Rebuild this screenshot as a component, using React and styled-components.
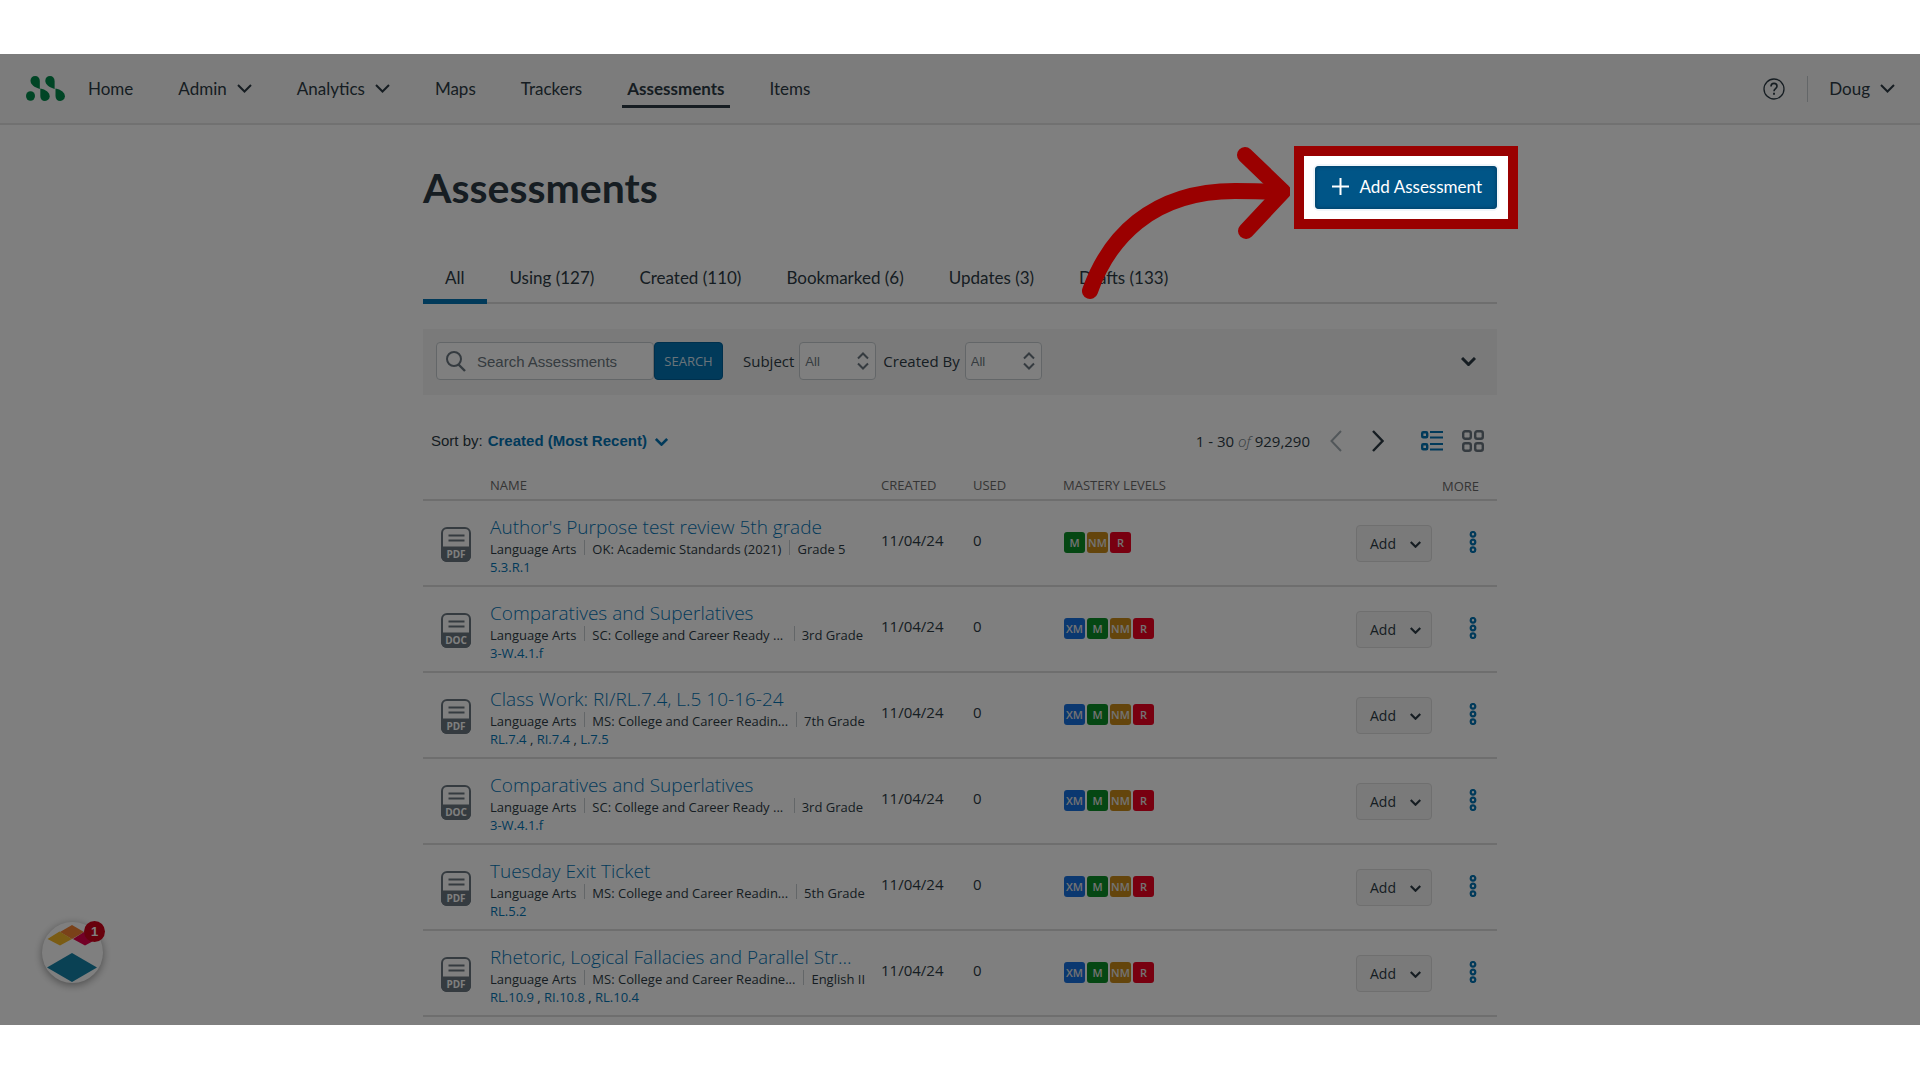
import React from 'react'
import styled, { createGlobalStyle } from 'styled-components'

const GlobalStyle = createGlobalStyle`
  * {
    box-sizing: border-box;
  }

  body {
    margin: 0;
    background-color: #fff;
    color: #2d3b45;
    font-family: "Open Sans", "Noto Sans", sans-serif;
    font-size: 15px;
  }

  a {
    color: inherit;
    text-decoration: none;
  }

  button, input, select {
    font: inherit;
    color: inherit;
    margin: 0;
    cursor: pointer;
  }
`

const Page = styled.div`
  padding: 54px 0;
`

const Stage = styled.div`
  position: relative;
  overflow: hidden;
  padding-bottom: 8px;
`

const Header = styled.header`
  height: 71px;
  padding: 0 25px 0 26px;
  display: flex;
  align-items: center;
  justify-content: space-between;
  background-color: #f8f8f8;
  border-bottom: 2px solid #e2e2e2;
  font-family: Lato, sans-serif;
  font-size: 17px;
`

const Nav = styled.nav`
  display: flex;
  align-items: center;
  gap: 35px;
`

const Logo = styled.a`
  display: flex;
  margin-right: -17px;
`

const NavLink = styled.a`
  display: flex;
  align-items: center;
  gap: 10px;
  height: 38px;
  padding: 0 5px;
  font-weight: ${props => props.$active ? 700 : 400};
  border-top: 3px solid transparent;
  border-bottom: 3px solid ${props => props.$active ? "#2d3b45" : "transparent"};
`

const HeaderRight = styled.div`
  display: flex;
  align-items: center;
`

const IconButton = styled.button`
  display: flex;
  align-items: center;
  justify-content: center;
  padding: 0;
  border: none;
  background: transparent;
  color: ${props => props.$color || "#2d3b45"};
`

const UserButton = styled(IconButton)`
  gap: 10px;
  height: 26px;
  margin-left: 22px;
  padding-left: 21px;
  border-left: 1px solid #c7cdd1;
`

const Main = styled.main`
  max-width: 1074px;
  margin: 0 auto;
  padding-top: 41px;
`

const TitleRow = styled.div`
  display: flex;
  align-items: center;
  justify-content: space-between;
  height: 43px;
`

const Title = styled.h1`
  margin: 0;
  font-family: Lato, sans-serif;
  font-size: 41px;
  font-weight: 700;
  line-height: 43px;
`

const AddWrap = styled.div`
  position: relative;
`

const AddButton = styled.button`
  display: flex;
  align-items: center;
  gap: 11px;
  height: 43px;
  padding: 0 15px 2px 17px;
  border: none;
  border-radius: 4px;
  background-color: #005587;
  box-shadow: inset 0 0 4px #00375a, 0 0 0 2px #f1f6fa;
  color: #fff;
  font-family: Lato, sans-serif;
  font-size: 17px;
`

/* dims everything on the stage except the framed button */
const Spotlight = styled.div`
  position: absolute;
  inset: -20px -21px;
  z-index: 10;
  border: 10px solid #9a0000;
  box-shadow: 0 0 0 3000px rgba(0, 0, 0, 0.5);
  pointer-events: none;
`

const Arrow = styled.svg`
  position: absolute;
  right: 207px;
  top: -24px;
  z-index: 11;
  pointer-events: none;
`

const Tabs = styled.nav`
  display: flex;
  gap: 1px;
  margin-top: 41px;
  height: 54px;
  box-shadow: inset 0 -2px #dcdcdc;
  font-family: Lato, sans-serif;
  font-size: 17px;
`

const Tab = styled.a`
  display: flex;
  align-items: center;
  padding: 0 22px;
  border-top: 5px solid transparent;
  border-bottom: 5px solid ${props => props.$active ? "#0374b5" : "transparent"};
`

const Filters = styled.form`
  display: flex;
  align-items: center;
  height: 66px;
  margin-top: 25px;
  padding: 0 21px 2px 13px;
  background-color: #f5f5f5;
`

const SearchBox = styled.label`
  display: flex;
  align-items: center;
  gap: 11px;
  width: 218px;
  height: 38px;
  padding: 0 9px;
  border: 1px solid #c7cdd1;
  border-radius: 4px;
  background-color: #fff;
  color: #6b7780;
`

const SearchInput = styled.input`
  flex: 1;
  min-width: 0;
  padding: 0;
  border: none;
  outline: none;
  background: transparent;
  font-family: "Liberation Sans", Arial, sans-serif;
  font-size: 15px;

  &::placeholder {
    color: #6b7780;
    opacity: 1;
  }
`

const SearchButton = styled.button`
  width: 69px;
  height: 38px;
  margin-right: 20px;
  padding: 0;
  border: 1px solid #00609a;
  border-radius: 4px;
  background-color: #0374b5;
  color: #d5e6f2;
  font-size: 13px;
`

const Field = styled.label`
  display: flex;
  align-items: center;
  gap: 5px;
  margin-right: 7px;
`

const SelectWrap = styled.span`
  position: relative;
  display: flex;
  color: #6b7780;

  svg {
    position: absolute;
    right: 7px;
    top: 10px;
    pointer-events: none;
  }
`

const Select = styled.select`
  appearance: none;
  width: 77px;
  height: 38px;
  padding: 0 5px;
  border: 1px solid #c7cdd1;
  border-radius: 4px;
  background-color: #fff;
  font-family: "Liberation Sans", Arial, sans-serif;
  font-size: 13px;
`

const FilterToggle = styled(IconButton)`
  margin-left: auto;
`

const Toolbar = styled.div`
  display: flex;
  align-items: center;
  justify-content: space-between;
  height: 38px;
  margin-top: 27px;
  padding: 0 13px 0 8px;
`

const Sort = styled.div`
  display: flex;
  align-items: center;
  gap: 5px;
  padding-bottom: 2px;
  font-family: "Liberation Sans", Arial, sans-serif;
`

const SortButton = styled(IconButton)`
  gap: 8px;
  font-weight: 700;

  svg {
    margin-top: 3px;
  }
`

const Pager = styled.div`
  display: flex;
  align-items: center;
`

const Of = styled.em`
  color: #6b7780;
  font-weight: 300;
`

const PagerButton = styled(IconButton)`
  width: 12px;
  margin-left: ${props => props.$gap}px;
`

const ViewButton = styled(IconButton)`
  margin-left: ${props => props.$gap}px;
`

const Table = styled.table`
  width: 100%;
  table-layout: fixed;
  border-collapse: separate;
  border-spacing: 0;
`

const Th = styled.th`
  width: ${props => props.$width ? props.$width + "px" : "auto"};
  height: 41px;
  padding: ${props => props.$right ? "12px 18px 0 0" : "10px 0 0"};
  border-bottom: 2px solid #dcdcdc;
  text-align: ${props => props.$right ? "right" : "left"};
  color: #6b6b6b;
  font-size: 13px;
  font-weight: 400;
  white-space: nowrap;
`

const Td = styled.td`
  height: 86px;
  padding: ${props => props.$pad || "0"};
  border-bottom: 2px solid #dcdcdc;
`

const Name = styled.div`
  width: 373px;
  white-space: nowrap;
`

const NameLink = styled.a`
  display: block;
  color: #0374b5;
  font-size: 19px;
  font-weight: 300;
  line-height: 26px;
`

const Meta = styled.div`
  display: flex;
  align-items: center;
  height: 18px;
  font-size: 13px;
  line-height: 18px;

  span + span {
    padding-left: 8px;
    background: linear-gradient(#c7cdd1, #c7cdd1) 0 0 / 1px 15px no-repeat;
  }
`

const MetaItem = styled.span`
  flex: ${props => props.$fill ? "1" : "none"};
  padding-right: 8px;

  &:last-child {
    padding-right: 0;
  }
`

const Standards = styled.div`
  font-size: 13px;
  line-height: 18px;

  a {
    color: #0374b5;
  }
`

const Levels = styled.div`
  display: flex;
  gap: 2px;
`

const levelColors = { XM: "#1770e0", M: "#0b8e26", NM: "#c98b19", R: "#f00020" }

const Level = styled.span`
  display: flex;
  align-items: center;
  justify-content: center;
  width: 21px;
  height: 21px;
  border-radius: 3px;
  background-color: ${props => levelColors[props.$level]};
  color: #e6e6e6;
  font-size: 11px;
  font-weight: 600;
`

const RowButton = styled.button`
  display: flex;
  align-items: center;
  justify-content: space-between;
  width: 76px;
  height: 37px;
  padding: 0 10px 0 13px;
  border: 1px solid #dedede;
  border-radius: 4px;
  background-color: #f5f5f5;
  font-size: 14px;

  svg {
    margin-top: 3px;
  }
`

const MoreButton = styled(IconButton)`
  margin-left: auto;
`

const Help = styled.button`
  position: absolute;
  left: 42px;
  bottom: 42px;
  width: 61px;
  height: 61px;
  padding: 0;
  border: none;
  border-radius: 50%;
  background-color: #fff;
  box-shadow: 0 2px 8px rgba(0, 0, 0, 0.4);
`

const HelpCount = styled.span`
  position: absolute;
  right: -2px;
  top: -1px;
  width: 21px;
  height: 21px;
  border-radius: 50%;
  background-color: #d0021b;
  color: #fff;
  font-family: "Liberation Sans", Arial, sans-serif;
  font-size: 13px;
  font-weight: 700;
  line-height: 21px;
`

const Chevron = ({ width = 15, height = 9, stroke = 2 }) => (
  <svg width={width} height={height} viewBox="0 0 15 9" fill="none" stroke="currentColor" strokeWidth={stroke}>
    <path d="M1 1l6.500 6.500L14 1" />
  </svg>
)

const UpDown = () => (
  <svg width="12" height="18" viewBox="0 0 12 18" fill="none" stroke="currentColor" strokeWidth="2">
    <path d="M1 6.500l5-5 5 5M1 11.500l5 5 5-5" />
  </svg>
)

const LogoMark = () => (
  <svg width="39" height="25" viewBox="0 0 39 25" fill="#008a4b">
    <path d="M9.200 0C12 0 13.800 2 13.800 5v8C8.500 11.500 4.500 8.500 4.500 4.800 4.500 2 6.500 0 9.200 0z" />
    <path d="M24 0c2.800 0 4.600 2 4.600 5v8C23.300 11.500 19.300 8.500 19.300 4.800 19.300 2 21.300 0 24 0z" />
    <ellipse cx="4.500" cy="20" rx="4.500" ry="4.800" />
    <path d="M14.300 12.500c5.300 1 9.400 4 9.400 7.800 0 2.700-2 4.700-4.700 4.700-2.800 0-4.700-2-4.700-5z" />
    <path d="M29.500 12.500c5.300 1 9.400 4 9.400 7.800 0 2.700-2 4.700-4.700 4.700-2.800 0-4.700-2-4.700-5z" />
  </svg>
)

const FileIcon = ({ type }) => (
  <svg width="30" height="35" viewBox="0 0 30 35" role="img" aria-label={type}>
    <rect x="1" y="1" width="28" height="33" rx="5" fill="none" stroke="#6b7780" strokeWidth="2" />
    <path d="M0 19.500h30V29a6 6 0 0 1-6 6H6a6 6 0 0 1-6-6z" fill="#6b7780" />
    <path d="M7.500 8.500h16M7.500 13.500h16" stroke="#6b7780" strokeWidth="2" />
    <text x="15" y="31" textAnchor="middle" fill="#fff" fontFamily="Open Sans, sans-serif" fontSize="10" fontWeight="700">{type}</text>
  </svg>
)

const navItems = [
  { label: "Home" },
  { label: "Admin", menu: true },
  { label: "Analytics", menu: true },
  { label: "Maps" },
  { label: "Trackers" },
  { label: "Assessments", active: true },
  { label: "Items" },
]

const tabs = ["All", "Using (127)", "Created (110)", "Bookmarked (6)", "Updates (3)", "Drafts (133)"]

const rows = [
  { type: "PDF", name: "Author's Purpose test review 5th grade", source: "OK: Academic Standards (2021)", grade: "Grade 5", standards: ["5.3.R.1"], levels: ["M", "NM", "R"] },
  { type: "DOC", name: "Comparatives and Superlatives", source: "SC: College and Career Ready ...", grade: "3rd Grade", standards: ["3-W.4.1.f"] },
  { type: "PDF", name: "Class Work: RI/RL.7.4, L.5 10-16-24", source: "MS: College and Career Readin...", grade: "7th Grade", standards: ["RL.7.4", "RI.7.4", "L.7.5"] },
  { type: "DOC", name: "Comparatives and Superlatives", source: "SC: College and Career Ready ...", grade: "3rd Grade", standards: ["3-W.4.1.f"] },
  { type: "PDF", name: "Tuesday Exit Ticket", source: "MS: College and Career Readin...", grade: "5th Grade", standards: ["RL.5.2"] },
  { type: "PDF", name: "Rhetoric, Logical Fallacies and Parallel Str...", source: "MS: College and Career Readine...", grade: "English II", standards: ["RL.10.9", "RI.10.8", "RL.10.4"] },
]

const Row = ({ row }) => {
  const levels = row.levels || ["XM", "M", "NM", "R"]

  return (
    <tr>
      <Td $pad="6px 0 0 18px"><FileIcon type={row.type} /></Td>
      <Td $pad="4px 0 0">
        <Name>
          <NameLink href="#">{row.name}</NameLink>
          <Meta>
            <MetaItem>Language Arts</MetaItem>
            <MetaItem $fill={row.source.endsWith("...")}>{row.source}</MetaItem>
            <MetaItem>{row.grade}</MetaItem>
          </Meta>
          <Standards>
            {row.standards.map((s, i) => (
              <React.Fragment key={s}>{i > 0 && " , "}<a href="#">{s}</a></React.Fragment>
            ))}
          </Standards>
        </Name>
      </Td>
      <Td $pad="0 0 6px">11/04/24</Td>
      <Td $pad="0 0 6px">0</Td>
      <Td $pad="0 0 2px 1px">
        <Levels>
          {levels.map(l => <Level key={l} $level={l}>{l}</Level>)}
        </Levels>
      </Td>
      <Td>
        <RowButton type="button">Add<Chevron width={11} height={7} stroke={3} /></RowButton>
      </Td>
      <Td $pad="0 20px 2px 0">
        <MoreButton type="button" $color="#0374b5" aria-label="More">
          <svg width="8" height="22" viewBox="0 0 8 22" fill="none" stroke="currentColor" strokeWidth="2.200">
            <circle cx="4" cy="3.300" r="2.300" />
            <circle cx="4" cy="11" r="2.300" />
            <circle cx="4" cy="18.700" r="2.300" />
          </svg>
        </MoreButton>
      </Td>
    </tr>
  )
}

const App = () => {
  return (
    <Page>
      <GlobalStyle />
      <Stage>
        <Header>
          <Nav>
            <Logo href="#" aria-label="Mastery"><LogoMark /></Logo>
            {navItems.map(item => (
              <NavLink key={item.label} href="#" $active={item.active}>
                {item.label}
                {item.menu && <Chevron />}
              </NavLink>
            ))}
          </Nav>
          <HeaderRight>
            <IconButton type="button" aria-label="Help">
              <svg width="22" height="22" viewBox="0 0 22 22" fill="none" stroke="currentColor" strokeWidth="1.300">
                <circle cx="11" cy="11" r="10" />
                <path d="M8 8.500C8 6.500 9.300 5.400 11 5.400s3 1.100 3 2.800c0 2.300-3 2.500-3 5" strokeWidth="1.600" />
                <path d="M11 14.800v1.900" strokeWidth="1.900" />
              </svg>
            </IconButton>
            <UserButton type="button">Doug <Chevron /></UserButton>
          </HeaderRight>
        </Header>

        <Main>
          <TitleRow>
            <Title>Assessments</Title>
            <AddWrap>
              <AddButton type="button">
                <svg width="17" height="17" viewBox="0 0 17 17" stroke="currentColor" strokeWidth="2">
                  <path d="M8.500 0v17M0 8.500h17" />
                </svg>
                Add Assessment
              </AddButton>
              <Spotlight />
              <Arrow width="212" height="160" viewBox="0 0 212 160" fill="none" stroke="#9a0000" strokeWidth="16" strokeLinecap="round" strokeLinejoin="round">
                <path d="M12 149C30 98 72 49 157 49q25 0 40 1" />
                <path d="M167 13l38 36.500L168 89" />
              </Arrow>
            </AddWrap>
          </TitleRow>

          <Tabs>
            {tabs.map((tab, i) => <Tab key={tab} href="#" $active={i === 0}>{tab}</Tab>)}
          </Tabs>

          <Filters>
            <SearchBox>
              <svg width="20" height="21" viewBox="0 0 20 21" fill="none" stroke="currentColor" strokeWidth="2">
                <circle cx="8" cy="8" r="7" />
                <path d="M12.500 13.500l6.500 6.500" strokeWidth="2.400" />
              </svg>
              <SearchInput type="text" placeholder="Search Assessments" aria-label="Search Assessments" />
            </SearchBox>
            <SearchButton type="button">SEARCH</SearchButton>
            <Field>
              Subject
              <SelectWrap>
                <Select defaultValue="All"><option>All</option></Select>
                <UpDown />
              </SelectWrap>
            </Field>
            <Field>
              Created By
              <SelectWrap>
                <Select defaultValue="All"><option>All</option></Select>
                <UpDown />
              </SelectWrap>
            </Field>
            <FilterToggle type="button" aria-label="More filters"><Chevron width={15} height={9} stroke={3} /></FilterToggle>
          </Filters>

          <Toolbar>
            <Sort>
              Sort by:
              <SortButton type="button" $color="#0374b5">
                Created (Most Recent)
                <Chevron width={13} height={8} stroke={3} />
              </SortButton>
            </Sort>
            <Pager>
              <span>1 - 30 <Of>of</Of> 929,290</span>
              <PagerButton type="button" aria-label="Previous" $gap={20} $color="#a5afb5">
                <svg width="12" height="22" viewBox="0 0 12 22" fill="none" stroke="currentColor" strokeWidth="2"><path d="M11 1L1.500 11 11 21" /></svg>
              </PagerButton>
              <PagerButton type="button" aria-label="Next" $gap={30}>
                <svg width="12" height="22" viewBox="0 0 12 22" fill="none" stroke="currentColor" strokeWidth="2.400"><path d="M1 1l9.500 10L1 21" /></svg>
              </PagerButton>
              <ViewButton type="button" aria-label="List view" $gap={37} $color="#0374b5">
                <svg width="22" height="22" viewBox="0 0 22 22" fill="none" stroke="currentColor" strokeWidth="2.400">
                  <rect x="1.200" y="2.200" width="5" height="5" rx="1" />
                  <rect x="1.200" y="14.200" width="5" height="5" rx="1" />
                  <path d="M9 2h13M9 7.500h13M9 14h13M9 19.500h13" strokeWidth="2" />
                </svg>
              </ViewButton>
              <ViewButton type="button" aria-label="Grid view" $gap={19} $color="#6b7780">
                <svg width="22" height="22" viewBox="0 0 22 22" fill="none" stroke="currentColor" strokeWidth="2.400">
                  <rect x="1.200" y="1.200" width="7.600" height="7.600" rx="2" />
                  <rect x="13.200" y="1.200" width="7.600" height="7.600" rx="2" />
                  <rect x="1.200" y="13.200" width="7.600" height="7.600" rx="2" />
                  <rect x="13.200" y="13.200" width="7.600" height="7.600" rx="2" />
                </svg>
              </ViewButton>
            </Pager>
          </Toolbar>

          <Table>
            <thead>
              <tr>
                <Th $width={67} aria-label="Type" />
                <Th>NAME</Th>
                <Th $width={92}>CREATED</Th>
                <Th $width={90}>USED</Th>
                <Th $width={293}>MASTERY LEVELS</Th>
                <Th $width={76} aria-label="Add" />
                <Th $width={65} $right>MORE</Th>
              </tr>
            </thead>
            <tbody>
              {rows.map((row, i) => <Row key={i} row={row} />)}
            </tbody>
          </Table>
        </Main>

        <Help type="button" aria-label="Help center, 1 new">
          <svg width="61" height="61" viewBox="0 0 61 61">
            <path d="M30 3l12 7-12 7-12-7z" fill="#f58233" />
            <path d="M17.500 9.500L30 17l-12 6.500L5.500 17z" fill="#f5b829" />
            <path d="M42 10l13 7-12 6.500L31 17z" fill="#e5004c" />
            <path d="M30 31l25 14.500-25 14.500L5 45.500z" fill="#1583a8" />
          </svg>
          <HelpCount>1</HelpCount>
        </Help>
      </Stage>
    </Page>
  )
}

export default App
